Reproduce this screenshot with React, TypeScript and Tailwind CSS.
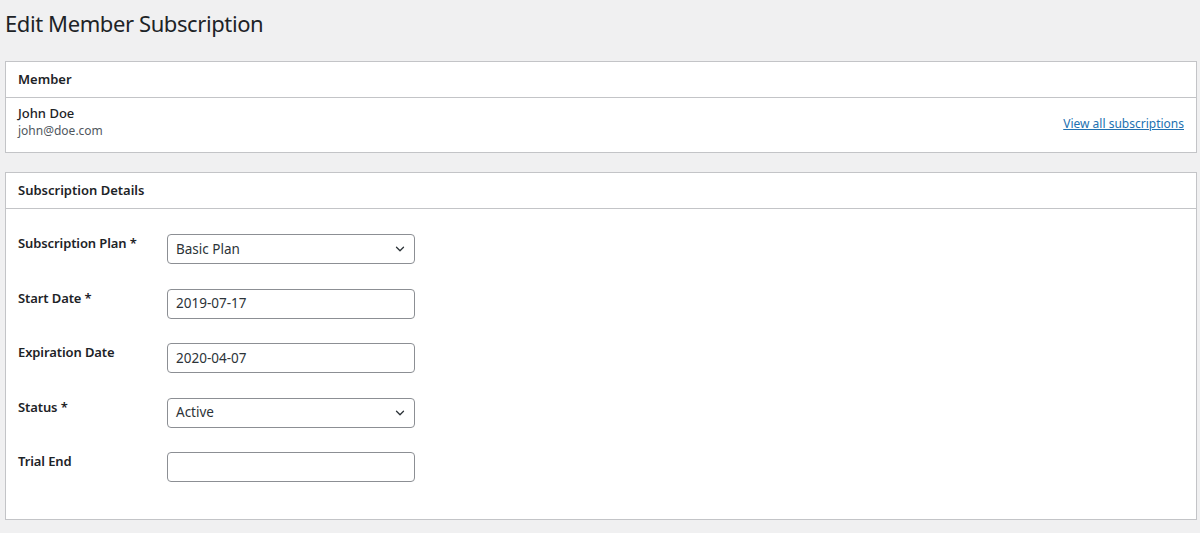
import { ChevronDown } from 'lucide-react';

const font = { fontFamily: '"Noto Sans", "Open Sans", sans-serif' };

function SelectBox({ value }: { value: string }) {
  return (
    <div className="relative flex h-[30px] w-[248px] items-center rounded-[4px] border border-[#8c8f94] bg-white pl-[8px] text-[13.5px] text-[#2c3338]">
      <span>{value}</span>
      <ChevronDown className="absolute right-[7px] top-[7px] h-[14px] w-[14px] text-[#2c3338]" strokeWidth={2.2} />
    </div>
  );
}

function TextBox({ value }: { value: string }) {
  return (
    <div className="flex h-[30px] w-[248px] items-center rounded-[4px] border border-[#8c8f94] bg-white pl-[8px] text-[13.5px] text-[#2c3338]">
      {value}
    </div>
  );
}

export default function App() {
  const rows = [
    { label: 'Subscription Plan *', field: <SelectBox value="Basic Plan" /> },
    { label: 'Start Date *', field: <TextBox value="2019-07-17" /> },
    { label: 'Expiration Date', field: <TextBox value="2020-04-07" /> },
    { label: 'Status *', field: <SelectBox value="Active" /> },
    { label: 'Trial End', field: <TextBox value="" /> },
  ];

  return (
    <div className="min-h-[533px] w-[1200px] bg-[#f0f0f1] text-[#1d2327]" style={font}>
      <h1 className="pl-[5px] pt-[8px] text-[22px] font-normal leading-[30px] tracking-[-0.4px] text-[#1d2327]">
        Edit Member Subscription
      </h1>

      {/* Member */}
      <div className="ml-[5px] mt-[23px] w-[1192px] border border-[#c3c4c7] bg-white">
        <div className="flex h-[36px] items-center border-b border-[#c3c4c7] px-[12px] text-[13px] font-semibold text-[#1d2327]">
          Member
        </div>
        <div className="flex h-[54px] items-center justify-between px-[12px] pb-[7px]">
          <div className="leading-[18px]">
            <div className="text-[13px] font-medium text-[#1d2327]">John Doe</div>
            <div className="text-[12px] text-[#50575e]">john@doe.com</div>
          </div>
          <a href="#" className="pt-[5px] text-[12px] text-[#2271b1] underline">
            View all subscriptions
          </a>
        </div>
      </div>

      {/* Subscription Details */}
      <div className="ml-[5px] mt-[19px] w-[1192px] border border-[#c3c4c7] bg-white">
        <div className="flex h-[36px] items-center border-b border-[#c3c4c7] px-[12px] text-[13px] font-semibold text-[#1d2327]">
          Subscription Details
        </div>
        <div className="flex flex-col gap-[24.5px] px-[12px] pb-[37px] pt-[25px]">
          {rows.map((r) => (
            <div key={r.label} className="flex items-start">
              <div className="w-[149px] text-[13px] font-semibold leading-[18px] tracking-[-0.1px] text-[#1d2327]">
                {r.label}
              </div>
              {r.field}
            </div>
          ))}
        </div>
      </div>
    </div>
  );
}
